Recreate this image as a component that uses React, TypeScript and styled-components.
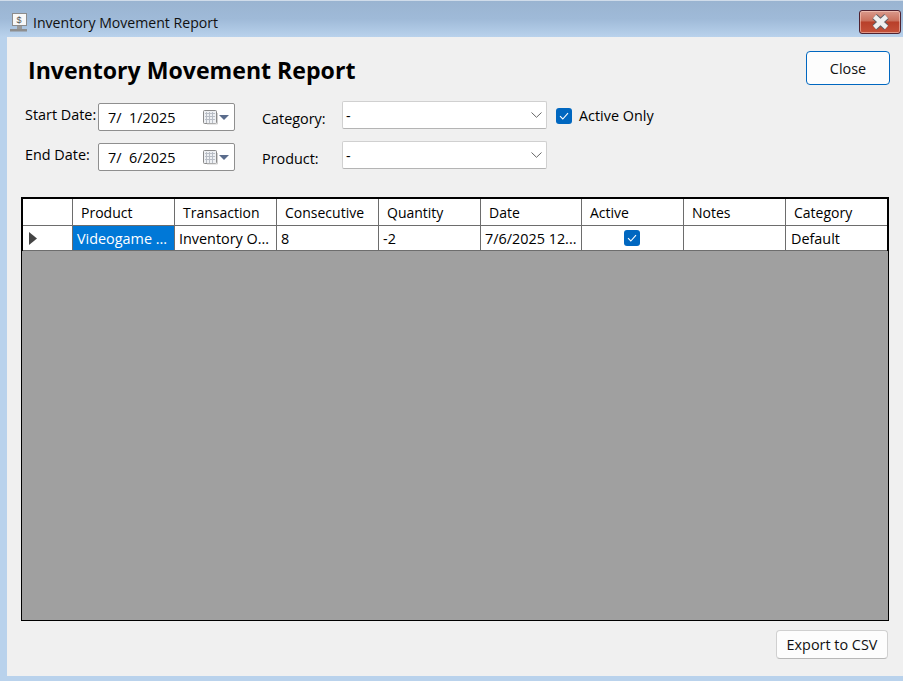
import React from "react";
import styled, { createGlobalStyle } from "styled-components";

const Global = createGlobalStyle`
  html, body { margin: 0; padding: 0; background: #b9d2ec; }
  body { font-family: "Open Sans", "Noto Sans", sans-serif; color: #000; overflow: hidden; }
`;

const FONT_SIZE = "14.4px";

const Window = styled.div`
  width: 903px;
  height: 681px;
  display: flex;
  flex-direction: column;
  background: #b9d2ec;
`;

const TitleBar = styled.div`
  height: 37px;
  flex: none;
  box-sizing: border-box;
  border-top: 1px solid #d0dcea;
  display: flex;
  align-items: center;
  padding: 0 2px 0 10px;
  background: linear-gradient(#9ab4d1, #9fbad8 50%, #b9d2ec);
`;

const TitleText = styled.span`
  margin-left: 4px;
  font-size: 14.1px;
  color: #111;
  flex: 1;
  padding-top: 6px;
`;

const TitleIcon = styled.svg`
  margin-top: 6px;
  flex: none;
`;

const CloseX = styled.div`
  width: 42px;
  height: 24px;
  box-sizing: border-box;
  margin-top: 6px;
  border: 1px solid #4f2230;
  border-radius: 3px;
  background: linear-gradient(#d99a8c, #c9705c 45%, #b8402a 50%, #c4513a);
  box-shadow: inset 0 0 0 1px rgba(255, 220, 210, 0.5);
  display: flex;
  align-items: center;
  justify-content: center;
`;

const Content = styled.div`
  flex: 1;
  margin: 0 0 5px 7px;
  padding: 14px 14px 17px 14px;
  background: #f0f0f0;
  display: flex;
  flex-direction: column;
  min-height: 0;
`;

const Header = styled.div`
  display: flex;
  justify-content: space-between;
  height: 34px;
  margin: 0 -1px 16px 0;
`;

const Heading = styled.h1`
  margin: 2px 0 0 7px;
  font-size: 23.1px;
  line-height: 34px;
  font-weight: 700;
`;

const Button = styled.button<{ $primary?: boolean; $w: number; $h: number }>`
  width: ${p => p.$w}px;
  height: ${p => p.$h}px;
  box-sizing: border-box;
  background: #fdfdfd;
  border: 1px solid ${p => (p.$primary ? "#0067c0" : "#d0d0d0")};
  border-bottom-color: ${p => (p.$primary ? "#0067c0" : "#b8b8b8")};
  border-radius: 4px;
  font: inherit;
  font-size: ${FONT_SIZE};
  color: #111;
  padding: 0;
`;

const Filters = styled.div`
  display: grid;
  grid-template-columns: 73px 137px 27px 80px 205px 9px auto;
  grid-auto-rows: 30px;
  row-gap: 10px;
  padding-left: 4px;
  height: 96px;
`;

const Label = styled.div<{ $top: number; $col: number }>`
  grid-column: ${p => p.$col};
  font-size: ${FONT_SIZE};
  line-height: 20px;
  padding-top: ${p => p.$top}px;
  white-space: nowrap;
`;

const DateBox = styled.div`
  grid-column: 2;
  margin-top: 2px;
  height: 28px;
  box-sizing: border-box;
  background: #fff;
  border: 1px solid #8f8f8f;
  border-radius: 2px;
  display: flex;
  align-items: center;
  padding: 0 1px 0 9px;
`;

const DateText = styled.span`
  flex: 1;
  font-size: ${FONT_SIZE};
  white-space: pre;
`;

const Select = styled.div`
  grid-column: 5;
  height: 28px;
  box-sizing: border-box;
  background: #fff;
  border: 1px solid #d0d0d0;
  border-bottom-color: #b4b4b4;
  border-radius: 2px;
  display: flex;
  align-items: center;
  justify-content: space-between;
  padding: 0 4px 0 3px;
  font-size: ${FONT_SIZE};
`;

const CheckRow = styled.div`
  grid-column: 7;
  display: flex;
  align-items: center;
  gap: 7px;
  height: 29px;
  font-size: ${FONT_SIZE};
`;

const CheckBox = styled.span`
  width: 16px;
  height: 16px;
  flex: none;
  border-radius: 3px;
  background: #0067c0;
  display: inline-flex;
  align-items: center;
  justify-content: center;
`;

const Table = styled.div`
  flex: 1;
  min-height: 0;
  box-sizing: border-box;
  border: 1px solid #000;
  background: #a0a0a0;
`;

const Rows = styled.div`
  border: 1px solid #000;
  border-bottom: 0;
`;

const Row = styled.div<{ $h: number }>`
  display: grid;
  grid-template-columns: 50px repeat(4, 102px) 101px 102px 102px 1fr;
  height: ${p => p.$h}px;
  box-sizing: border-box;
  border-bottom: 1px solid #6d6d6d;
  background: #fff;
`;

const Cell = styled.div<{ $selected?: boolean; $pad: number; $center?: boolean; $size?: string }>`
  box-sizing: border-box;
  min-width: 0;
  border-right: 1px solid #6d6d6d;
  padding-left: ${p => p.$pad}px;
  padding-right: ${p => (p.$center ? 2 : 0)}px;
  font-size: ${p => p.$size || FONT_SIZE};
  white-space: nowrap;
  overflow: hidden;
  display: flex;
  align-items: center;
  justify-content: ${p => (p.$center ? "center" : "flex-start")};
  background: ${p => (p.$selected ? "#0078d7" : "#fff")};
  color: ${p => (p.$selected ? "#fff" : "#000")};
  &:last-child { border-right: 0; }
`;

const Footer = styled.div`
  display: flex;
  justify-content: flex-end;
  padding: 9px 1px 0 0;
`;

const Check = () => (
  <svg width="10" height="8" viewBox="0 0 10 8">
    <path d="M1 4.2 L3.8 7 L9 1.2" fill="none" stroke="#fff" strokeWidth="1.1" />
  </svg>
);

const Chevron = () => (
  <svg width="11" height="6" viewBox="0 0 11 6">
    <path d="M0.5 0.5 L5.5 5.3 L10.5 0.5" fill="none" stroke="#666" strokeWidth="1" />
  </svg>
);

const CalendarDrop = () => (
  <svg width="30" height="16" viewBox="0 0 30 16">
    <rect x="0.5" y="1.5" width="13" height="13" rx="1" fill="#eef0f3" stroke="#8a8a8a" />
    <path d="M2 4.5H12M2 7.5H12M2 10.5H12M3.5 3V14M6.5 3V14M9.5 3V14" stroke="#b9bec6" strokeWidth="1" fill="none" />
    <path d="M14.5 4V15H4" stroke="#d0d0d0" fill="none" />
    <path d="M16 6H26L21 11Z" fill="#5a6c8c" />
  </svg>
);

const columns = ["Product", "Transaction", "Consecutive", "Quantity", "Date", "Active", "Notes", "Category"];

export default function App() {
  return (
    <Window>
      <Global />
      <TitleBar>
        <TitleIcon width="19" height="19" viewBox="0 0 19 19">
          <rect x="2.5" y="0.5" width="14" height="12" fill="#f8f8f8" stroke="#8c8c8c" />
          <text x="6.5" y="10" fontSize="9" fontFamily="Liberation Sans" fill="#555">$</text>
          <rect x="7" y="13" width="5" height="3" fill="#999" />
          <rect x="0" y="16" width="17" height="2.5" fill="#8e8e8e" />
        </TitleIcon>
        <TitleText>Inventory Movement Report</TitleText>
        <CloseX>
          <svg width="19" height="16" viewBox="0 0 19 16">
            <path d="M3.5 2.5 L15.5 13.5 M15.5 2.5 L3.5 13.5" stroke="#5e5e66" strokeWidth="6.5" fill="none" />
            <path d="M3.5 2.5 L15.5 13.5 M15.5 2.5 L3.5 13.5" stroke="#efefef" strokeWidth="4.6" fill="none" />
          </svg>
        </CloseX>
      </TitleBar>
      <Content>
        <Header>
          <Heading>Inventory Movement Report</Heading>
          <Button $primary $w={84} $h={34}>Close</Button>
        </Header>
        <Filters>
          <Label $col={1} $top={4}>Start Date:</Label>
          <DateBox>
            <DateText>{"7/  1/2025"}</DateText>
            <CalendarDrop />
          </DateBox>
          <Label $col={4} $top={8}>Category:</Label>
          <Select>-<Chevron /></Select>
          <CheckRow>
            <CheckBox><Check /></CheckBox>
            Active Only
          </CheckRow>
          <Label $col={1} $top={4}>End Date:</Label>
          <DateBox>
            <DateText>{"7/  6/2025"}</DateText>
            <CalendarDrop />
          </DateBox>
          <Label $col={4} $top={8}>Product:</Label>
          <Select>-<Chevron /></Select>
        </Filters>
        <Table>
          <Rows>
            <Row $h={27}>
              <Cell $pad={0} />
              {columns.map(c => (
                <Cell key={c} $pad={8} $size="14px">{c}</Cell>
              ))}
            </Row>
            <Row $h={25}>
              <Cell $pad={6}>
                <svg width="8" height="13" viewBox="0 0 8 13"><path d="M0 0 L8 6.5 L0 13Z" fill="#444" /></svg>
              </Cell>
              <Cell $pad={4} $selected>Videogame ...</Cell>
              <Cell $pad={4}>Inventory O...</Cell>
              <Cell $pad={4}>8</Cell>
              <Cell $pad={4}>-2</Cell>
              <Cell $pad={4}>7/6/2025 12...</Cell>
              <Cell $pad={0} $center><CheckBox><Check /></CheckBox></Cell>
              <Cell $pad={4} />
              <Cell $pad={5}>Default</Cell>
            </Row>
          </Rows>
        </Table>
        <Footer>
          <Button $w={112} $h={29}>Export to CSV</Button>
        </Footer>
      </Content>
    </Window>
  );
}
